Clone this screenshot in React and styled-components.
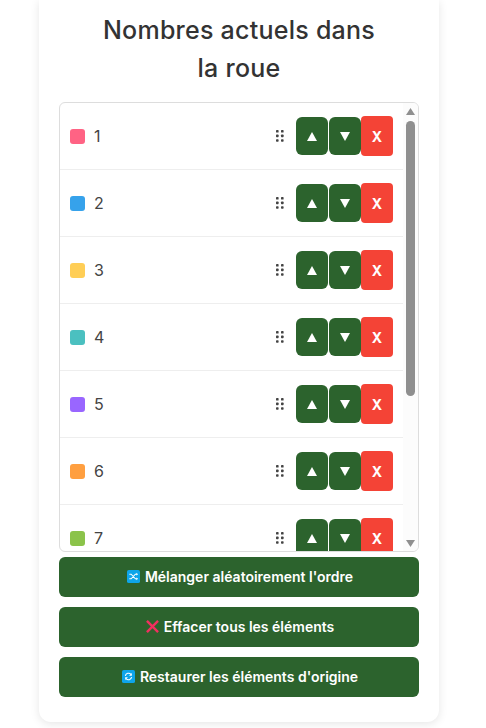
import React from 'react';
import styled, { createGlobalStyle } from 'styled-components';

const GlobalStyle = createGlobalStyle`
  html, body {
    margin: 0;
    padding: 0;
    background: #fff;
    font-family: 'Inter', 'Liberation Sans', sans-serif;
  }
  * { box-sizing: border-box; }
`;

const Page = styled.div`
  width: 486px;
  height: 728px;
  overflow: hidden;
  padding: 0 47px 6px 39px;
`;

const Card = styled.section`
  width: 400px;
  height: 722px;
  background: #fff;
  border-radius: 0 0 12px 12px;
  box-shadow: 0 2px 10px rgba(0, 0, 0, 0.1);
  padding: 11px 20px 25px;
`;

const Title = styled.h2`
  margin: 0 0 15px;
  font-size: 25px;
  font-weight: 500;
  line-height: 38px;
  letter-spacing: 0.25px;
  color: #333;
  text-align: center;
`;

const ListFrame = styled.div`
  display: flex;
  height: 450px;
  border: 1px solid #ddd;
  border-radius: 6px;
  overflow: hidden;
  margin-bottom: 5px;
`;

const Rows = styled.div`
  flex: 1;
  min-width: 0;
  overflow: hidden;
`;

const Scrollbar = styled.div`
  width: 15px;
  flex: none;
  display: flex;
  flex-direction: column;
  align-items: center;
  background: #fcfcfc;
  padding: 5px 0 4px;
`;

const ScrollArrow = styled.svg`
  width: 9px;
  height: 7px;
  flex: none;
  fill: #8f8f8f;
`;

const ScrollThumb = styled.div`
  width: 9px;
  height: 275px;
  margin-top: 6px;
  margin-bottom: auto;
  border-radius: 5px;
  background: #8f8f8f;
`;

const Row = styled.div`
  display: flex;
  align-items: center;
  flex: none;
  height: 67px;
  padding: 0 10px;
  border-bottom: 1px solid #eee;
`;

const Swatch = styled.span`
  width: 15px;
  height: 15px;
  border-radius: 3px;
  margin-right: 9px;
  background: ${(p) => p.$color};
`;

const Label = styled.span`
  flex: 1;
  font-size: 16px;
  color: #444;
`;

const Grip = styled.svg`
  width: 8px;
  height: 12px;
  margin-right: 12px;
  fill: #444;
`;

const MoveButton = styled.button`
  width: 32px;
  height: 38px;
  margin: 0;
  padding: 0;
  border: none;
  border-radius: 6px;
  background: #2c632d;
  display: flex;
  align-items: center;
  justify-content: center;
  & + & {
    margin-left: 1px;
  }
`;

const Arrow = styled.svg`
  width: 10px;
  height: 9px;
  fill: #fff;
`;

const RemoveButton = styled.button`
  width: 32px;
  height: 40px;
  padding: 0;
  border: none;
  border-radius: 4px;
  background: #f44336;
  color: #fff;
  font-family: inherit;
  font-size: 14px;
  font-weight: 700;
`;

const ActionButton = styled.button`
  display: flex;
  align-items: center;
  justify-content: center;
  gap: 5px;
  width: 100%;
  height: 40px;
  margin-bottom: 10px;
  padding: 0 0 2px 2px;
  border: none;
  border-radius: 6px;
  background: #2c632d;
  color: #fff;
  font-family: inherit;
  font-size: 14px;
  font-weight: 600;
  &:last-child {
    margin-bottom: 0;
  }
`;

const Emoji = styled.svg`
  width: 13px;
  height: 13px;
  flex: none;
`;

const colors = ['#ff6384', '#36a2eb', '#ffce56', '#4bc0c0', '#9966ff', '#ff9f40', '#8bc34a'];

const DragIcon = () => (
  <Grip viewBox="0 0 8 12">
    {[0, 4.6, 9.2].map((y) =>
      [0, 5].map((x) => <rect key={`${x}-${y}`} x={x} y={y} width="2.6" height="2.6" rx="0.7" />)
    )}
  </Grip>
);

const ShuffleIcon = () => (
  <Emoji viewBox="0 0 14 14">
    <rect width="14" height="14" rx="2" fill="#0ea5e9" />
    <path d="M2.5 4.5h2l4.5 5h1.5M2.5 9.5h2l4.5-5h1.5" stroke="#fff" strokeWidth="1.1" fill="none" />
    <path d="M10 3l2 1.5-2 1.5zM10 8l2 1.5-2 1.5z" fill="#fff" />
  </Emoji>
);

const CrossIcon = () => (
  <Emoji viewBox="0 0 14 14">
    <path d="M1 1l12 12M13 1L1 13" stroke="#f0305f" strokeWidth="2.6" fill="none" />
  </Emoji>
);

const RestoreIcon = () => (
  <Emoji viewBox="0 0 14 14">
    <rect width="14" height="14" rx="2" fill="#0ea5e9" />
    <path d="M3.6 6.2A3.5 3.5 0 0 1 9.6 4.6M10.4 7.8A3.5 3.5 0 0 1 4.4 9.4" stroke="#fff" strokeWidth="1.2" fill="none" />
    <path d="M10.6 3.2v3h-3zM3.4 10.8v-3h3z" fill="#fff" />
  </Emoji>
);

export default function App() {
  return (
    <Page>
      <GlobalStyle />
      <Card>
        <Title>Nombres actuels dans<br />la roue</Title>
        <ListFrame>
          <Rows>
            {colors.map((color, i) => (
              <Row key={color}>
                <Swatch $color={color} />
                <Label>{i + 1}</Label>
                <DragIcon />
                <MoveButton>
                  <Arrow viewBox="0 0 10 9"><path d="M5 0l5 9H0z" /></Arrow>
                </MoveButton>
                <MoveButton>
                  <Arrow viewBox="0 0 10 9"><path d="M0 0h10L5 9z" /></Arrow>
                </MoveButton>
                <RemoveButton>X</RemoveButton>
              </Row>
            ))}
          </Rows>
          <Scrollbar>
            <ScrollArrow viewBox="0 0 9 7"><path d="M4.5 0L9 7H0z" /></ScrollArrow>
            <ScrollThumb />
            <ScrollArrow viewBox="0 0 9 7"><path d="M0 0h9L4.5 7z" /></ScrollArrow>
          </Scrollbar>
        </ListFrame>
        <ActionButton><ShuffleIcon />Mélanger aléatoirement l'ordre</ActionButton>
        <ActionButton><CrossIcon />Effacer tous les éléments</ActionButton>
        <ActionButton><RestoreIcon />Restaurer les éléments d'origine</ActionButton>
      </Card>
    </Page>
  );
}
